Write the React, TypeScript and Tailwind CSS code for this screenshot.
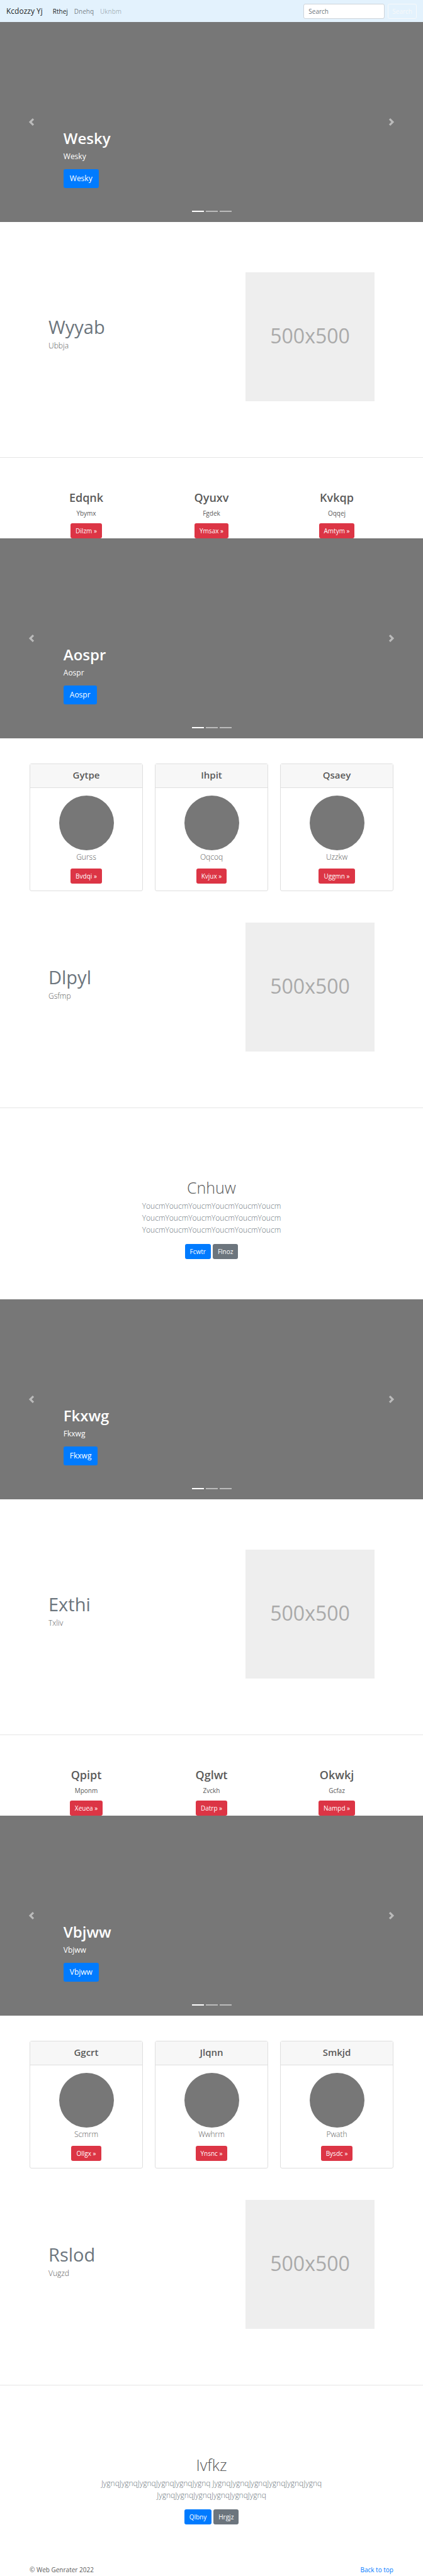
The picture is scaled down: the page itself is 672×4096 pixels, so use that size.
import React from "react";

type Item = { title: string; text: string; action: string };

const btn = "inline-block rounded-[3px] px-2 py-[4px] text-[10px] leading-[16px] text-white";

function Navbar() {
  return (
    <nav className="flex h-[35px] items-center bg-[#e3f2fd] px-[10px]">
      <a href="#top" className="mr-4 text-[12px] leading-[18px] text-black/90">Kcdozzy Yj</a>
      <ul className="flex flex-1 items-center gap-[10px] text-[10px] leading-[16px]">
        <li><a href="#rthej" className="text-black/90">Rthej</a></li>
        <li><a href="#dnehq" className="text-black/50">Dnehq</a></li>
        <li><a href="#uknbm" className="text-black/30">Uknbm</a></li>
      </ul>
      <form className="flex gap-[5px]" onSubmit={(e) => e.preventDefault()}>
        <input
          type="search"
          aria-label="Search"
          placeholder="Search"
          className="h-6 w-[129px] rounded-[3px] border border-[#ced4da] bg-white px-[7px] text-[10px] text-[#495057] placeholder:text-[#6c757d]"
        />
        <button type="submit" className="h-6 rounded-[3px] border border-[#f8f9fa] px-[6px] text-[10px] leading-[16px] text-[#f8f9fa]">
          Search
        </button>
      </form>
    </nav>
  );
}

function Carousel({ label }: { label: string }) {
  return (
    <section className="relative h-[318px] bg-[#777777]">
      <div className="flex h-full flex-col items-start justify-end px-[15%] pb-[54px] text-white">
        <h1 className="text-[24px] leading-[30px] font-semibold">{label}</h1>
        <p className="mt-[5px] mb-[11px] text-[12px] leading-[18px]">{label}</p>
        <a href="#more" className="rounded-[3px] bg-[#007bff] px-[10px] py-[6px] text-[12px] leading-[18px]">{label}</a>
      </div>
      <button type="button" aria-label="Previous" className="absolute inset-y-0 left-0 flex w-[15%] items-center justify-center text-white opacity-50">
        <svg viewBox="0 0 8 8" className="size-3" fill="currentColor">
          <path d="M5.25 0l-4 4 4 4 1.5-1.5-2.5-2.5 2.5-2.5-1.5-1.5z" />
        </svg>
      </button>
      <button type="button" aria-label="Next" className="absolute inset-y-0 right-0 flex w-[15%] items-center justify-center text-white opacity-50">
        <svg viewBox="0 0 8 8" className="size-3" fill="currentColor">
          <path d="M2.75 0l-1.5 1.5 2.5 2.5-2.5 2.5 1.5 1.5 4-4-4-4z" />
        </svg>
      </button>
      <div className="absolute inset-x-0 bottom-4 flex justify-center gap-[3px]">
        <span className="h-[2px] w-[19px] bg-white" />
        <span className="h-[2px] w-[19px] bg-white/50" />
        <span className="h-[2px] w-[19px] bg-white/50" />
      </div>
    </section>
  );
}

function Feature({ title, text, afterCards = false }: { title: string; text: string; afterCards?: boolean }) {
  return (
    <section className={`flex items-start justify-between border-b border-[#e5e5e5] px-[77px] pb-[89px] ${afterCards ? "pt-[50px]" : "pt-20"}`}>
      <div className="pt-[68px]">
        <h2 className="text-[29px] leading-[38px] text-[#6c757d]">{title}</h2>
        <p className="text-[12px] leading-[22px] font-light">{text}</p>
      </div>
      <div role="img" aria-label="500x500" className="flex size-[205px] items-center justify-center bg-[#eeeeee] pb-[3px] text-[32px] leading-[40px] text-[#aaaaaa]">
        500x500
      </div>
    </section>
  );
}

function Columns({ items }: { items: Item[] }) {
  return (
    <section className="grid grid-cols-3 gap-[19px] px-[47px] pt-[50px] text-center">
      {items.map((item) => (
        <div key={item.title}>
          <h2 className="text-[18px] leading-[26px] font-semibold">{item.title}</h2>
          <p className="mt-[4px] mb-[8px] text-[10px] leading-[16px]">{item.text}</p>
          <a href="#details" className={`${btn} bg-[#dc3545] align-top`}>{item.action} »</a>
        </div>
      ))}
    </section>
  );
}

function Cards({ items }: { items: Item[] }) {
  return (
    <section className="grid grid-cols-3 gap-[19px] px-[47px] pt-10 text-center">
      {items.map((item) => (
        <article key={item.title} className="rounded-[3px] border border-[#dfdfdf]">
          <h4 className="border-b border-[#dfdfdf] bg-[#f7f7f7] pt-[7px] pb-[10px] text-[15px] leading-[20px] font-semibold">{item.title}</h4>
          <div className="px-3 pt-[12px] pb-[11px]">
            <div className="mx-auto size-[87px] rounded-full bg-[#777777]" />
            <p className="mb-[7px] text-[12px] leading-[22px] font-light">{item.text}</p>
            <a href="#details" className={`${btn} bg-[#dc3545] align-top`}>{item.action} »</a>
          </div>
        </article>
      ))}
    </section>
  );
}

function CallToAction({ title, lines, primary, secondary }: { title: string; lines: string; primary: string; secondary: string }) {
  return (
    <section className="px-[144px] pt-[110px] pb-16 text-center">
      <h1 className="text-[25px] leading-[32px] font-light">{title}</h1>
      <p className="mt-[4px] mb-[13px] text-[12px] leading-[19px] font-light text-[#6c757d]">{lines}</p>
      <div className="flex justify-center gap-[3px]">
        <a href="#primary" className={`${btn} bg-[#007bff]`}>{primary}</a>
        <a href="#secondary" className={`${btn} bg-[#6c757d]`}>{secondary}</a>
      </div>
    </section>
  );
}

export default function App() {
  return (
    <div id="top" className="bg-white font-['Open_Sans','Noto_Sans',sans-serif] text-[10px] text-[#5a5a5a]">
      <Navbar />
      <main>
        <Carousel label="Wesky" />
        <Feature title="Wyyab" text="Ubbja" />
        <Columns
          items={[
            { title: "Edqnk", text: "Ybymx", action: "Dilzm" },
            { title: "Qyuxv", text: "Fgdek", action: "Ymsax" },
            { title: "Kvkqp", text: "Oqqej", action: "Amtym" },
          ]}
        />
        <Carousel label="Aospr" />
        <Cards
          items={[
            { title: "Gytpe", text: "Gurss", action: "Bvdqi" },
            { title: "Ihpit", text: "Oqcoq", action: "Kvjux" },
            { title: "Qsaey", text: "Uzzkw", action: "Uggmn" },
          ]}
        />
        <Feature title="Dlpyl" text="Gsfmp" afterCards />
        <CallToAction
          title="Cnhuw"
          lines="YoucmYoucmYoucmYoucmYoucmYoucm YoucmYoucmYoucmYoucmYoucmYoucm YoucmYoucmYoucmYoucmYoucmYoucm"
          primary="Fcwtr"
          secondary="Flnoz"
        />
        <Carousel label="Fkxwg" />
        <Feature title="Exthi" text="Txliv" />
        <Columns
          items={[
            { title: "Qpipt", text: "Mponm", action: "Xeuea" },
            { title: "Qglwt", text: "Zvckh", action: "Datrp" },
            { title: "Okwkj", text: "Gcfaz", action: "Nampd" },
          ]}
        />
        <Carousel label="Vbjww" />
        <Cards
          items={[
            { title: "Ggcrt", text: "Scmrm", action: "Ollgx" },
            { title: "Jlqnn", text: "Wwhrm", action: "Ynsnc" },
            { title: "Smkjd", text: "Pwath", action: "Bysdc" },
          ]}
        />
        <Feature title="Rslod" text="Vugzd" afterCards />
        <CallToAction
          title="Ivfkz"
          lines="JygnqJygnqJygnqJygnqJygnqJygnq JygnqJygnqJygnqJygnqJygnqJygnq JygnqJygnqJygnqJygnqJygnqJygnq"
          primary="Qlbny"
          secondary="Hrgjz"
        />
      </main>
      <footer className="flex justify-between px-[47px] pb-[2px] text-[10px] leading-[16px]">
        <p>© Web Genrater 2022</p>
        <a href="#top" className="text-[#007bff]">Back to top</a>
      </footer>
    </div>
  );
}
